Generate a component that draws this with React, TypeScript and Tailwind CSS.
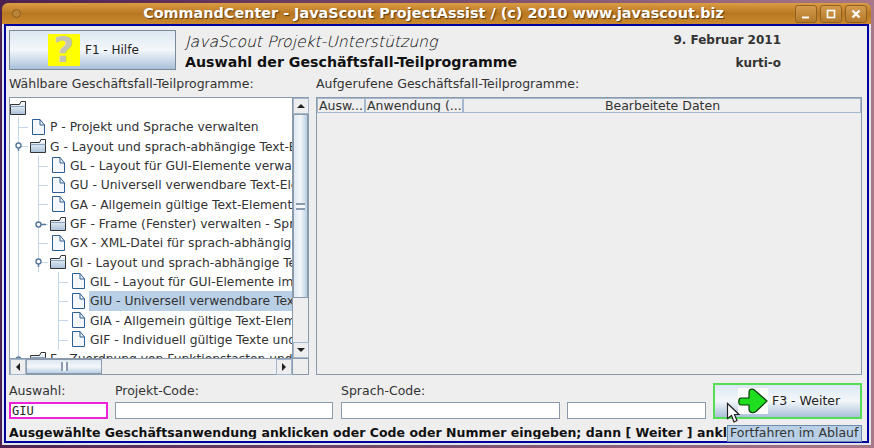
import React from "react";

const FileIcon = () => (
  <svg width="15" height="17" viewBox="0 0 15 17" className="shrink-0">
    <path d="M2.5 .5H10L14.5 6V15.5H2.5Z" fill="#f4f8fc" stroke="#2f5f92" />
    <path d="M10 .5V6H14.5" fill="none" stroke="#2f5f92" />
  </svg>
);

const FolderIcon = () => (
  <svg width="16" height="14" viewBox="0 0 16 14" className="shrink-0">
    <defs>
      <linearGradient id="fold" x1="0" y1="0" x2="0" y2="1">
        <stop offset="0" stopColor="#ffffff" />
        <stop offset="1" stopColor="#a9c1da" />
      </linearGradient>
    </defs>
    <path d="M.5 3.5H9.5L11 .5H15.5V13.5H.5Z" fill="url(#fold)" stroke="#333333" />
    <path d="M.5 5.5H15.5" stroke="#8da5bf" />
  </svg>
);

type Row = { depth: number; kind: "file" | "folder"; text: string; open?: boolean; closed?: boolean; sel?: boolean; v: number[] };

const rows: Row[] = [
  { depth: 0, kind: "folder", text: "", v: [] },
  { depth: 1, kind: "file", text: "P - Projekt und Sprache verwalten", v: [1] },
  { depth: 1, kind: "folder", text: "G - Layout und sprach-abhängige Text-Elemente", open: true, v: [1] },
  { depth: 2, kind: "file", text: "GL - Layout für GUI-Elemente verwalten", v: [1, 2] },
  { depth: 2, kind: "file", text: "GU - Universell verwendbare Text-Elemente", v: [1, 2] },
  { depth: 2, kind: "file", text: "GA - Allgemein gültige Text-Elemente", v: [1, 2] },
  { depth: 2, kind: "folder", text: "GF - Frame (Fenster) verwalten - Sprache", closed: true, v: [1, 2] },
  { depth: 2, kind: "file", text: "GX - XML-Datei für sprach-abhängige Texte", v: [1, 2] },
  { depth: 2, kind: "folder", text: "GI - Layout und sprach-abhängige Texte", open: true, v: [1, 2] },
  { depth: 3, kind: "file", text: "GIL - Layout für GUI-Elemente implementieren", v: [1, 3] },
  { depth: 3, kind: "file", text: "GIU - Universell verwendbare Texte", sel: true, v: [1, 3] },
  { depth: 3, kind: "file", text: "GIA - Allgemein gültige Text-Elemente", v: [1, 3] },
  { depth: 3, kind: "file", text: "GIF - Individuell gültige Texte und Bilder", v: [1, 3] },
  { depth: 1, kind: "folder", text: "F - Zuordnung von Funktionstasten und Buttons", closed: true, v: [1] },
];

const Guides = ({ row }: { row: Row }) => {
  const w = row.depth * 20;
  if (w === 0) return null;
  const hx = (row.depth - 1) * 20 + 8;
  const spines: Record<number, number> = { 1: 8, 2: 28, 3: 48 };
  return (
    <svg width={w} height="20" viewBox={`0 0 ${w} 20`} className="shrink-0">
      {row.v.map((d) => (
        <path key={d} d={`M${spines[d] + 0.5} 0V20`} stroke="#c6d6e6" fill="none" />
      ))}
      <path d={`M${hx} 10.5H${hx + 10}`} stroke="#c6d6e6" />
      {row.open && (
        <>
          <circle cx={hx + 0.5} cy="9.5" r="2.5" fill="#fff" stroke="#56789c" strokeWidth="1.4" />
          <path d={`M${hx + 0.5} 12V15`} stroke="#56789c" strokeWidth="1.4" />
        </>
      )}
      {row.closed && (
        <>
          <circle cx={hx + 0.5} cy="10.5" r="2.5" fill="#fff" stroke="#56789c" strokeWidth="1.4" />
          <path d={`M${hx + 3} 10.5H${hx + 8}`} stroke="#56789c" strokeWidth="1.4" />
        </>
      )}
    </svg>
  );
};

const Arrow = ({ dir }: { dir: "up" | "down" | "left" | "right" }) => {
  const d = {
    up: "M1 7H9L5 3Z",
    down: "M1 3H9L5 7Z",
    left: "M7 1V9L3 5Z",
    right: "M3 1V9L7 5Z",
  }[dir];
  return (
    <svg width="10" height="10" viewBox="0 0 10 10">
      <path d={d} fill="#222" />
    </svg>
  );
};

const ScrollBtn = ({ dir }: { dir: "up" | "down" | "left" | "right" }) => (
  <div className="flex h-4 w-4 shrink-0 items-center justify-center border border-[#a3b8cc] bg-[#eeeeee]">
    <Arrow dir={dir} />
  </div>
);

const Field = ({ label, w, value, cls }: { label?: string; w: string; value?: string; cls?: string }) => (
  <div className={`flex flex-col ${w}`}>
    <div className="h-[17px] text-[12.5px] leading-[12px] text-[#333]">{label ?? "\u00a0"}</div>
    <div className={cls ?? "h-[17px] border border-[#8a9aaa] bg-white"}>
      {value && <div className="pl-[1px] font-['DejaVu_Sans_Mono',monospace] text-[12px] leading-[14px] text-[#222]">{value}</div>}
    </div>
  </div>
);

export default function App() {
  return (
    <div className="relative h-[448px] w-[874px] overflow-hidden bg-gradient-to-r from-[#4d214f] to-[#a87888] pt-[3px] pl-[2px] font-['DejaVu_Sans',sans-serif]">
      <div className="flex h-[442px] w-[869px] flex-col overflow-hidden rounded-t-[6px]">
        {/* title bar */}
        <div className="relative flex h-[21px] shrink-0 items-center justify-center bg-gradient-to-b from-[#dc9c42] via-[#b87822] to-[#cc8a2e] pr-[6px]">
          <div className="absolute left-[10px] top-[6px] h-[9px] w-[9px] rounded-full border border-[#8d5d1c] bg-[#b9843c]" />
          <span className="text-[14.4px] font-bold text-white [text-shadow:1px_1px_1px_#5a3a10]">
            CommandCenter - JavaScout ProjectAssist / (c) 2010 www.javascout.biz
          </span>
          <div className="absolute right-[4px] top-[2px] flex gap-[3px]">
            {["min", "max", "close"].map((k) => (
              <div key={k} className="flex h-[18px] w-[22px] items-center justify-center rounded-[3px] border border-[#8f6222] bg-gradient-to-b from-[#d39b4c] to-[#b57a2a]">
                <svg width="12" height="12" viewBox="0 0 12 12">
                  {k === "min" && <path d="M2 9.5H9" stroke="#fff" strokeWidth="2" />}
                  {k === "max" && <rect x="2.5" y="2.5" width="7" height="7" fill="none" stroke="#fff" strokeWidth="1.6" />}
                  {k === "close" && <path d="M2.5 2.5L9.5 9.5M9.5 2.5L2.5 9.5" stroke="#fff" strokeWidth="2.4" />}
                </svg>
              </div>
            ))}
          </div>
        </div>
        {/* body */}
        <div className="flex min-h-0 flex-1 flex-col border-x-2 border-b-2 border-[#dfe3ea]">
          <div className="flex min-h-0 flex-1 flex-col overflow-hidden border-2 border-[#00009c] bg-[#eeeeee] pl-[3px] pr-[5px] pt-[4px] text-[#333]">
            <div className="flex h-[40px] shrink-0">
              <div className="flex h-[40px] w-[167px] items-center border border-[#7a8a9a] bg-gradient-to-b from-[#dde8f3] via-[#f4f7fa] to-[#a9c1da] pl-[38px]">
                <div className="flex h-[32px] w-[32px] items-center justify-center overflow-hidden bg-[#ffff00] text-[36px] font-bold leading-none text-[#c4c4b4]">?</div>
                <span className="ml-[5px] text-[12px] text-[#222]">F1 - Hilfe</span>
              </div>
              <div className="ml-[9px] flex flex-1 flex-col">
                <div className="flex h-[22px] items-center justify-between pr-[81px]">
                  <span className="pt-[2px] font-['DejaVu_Sans_Light','DejaVu_Sans',sans-serif] text-[15.6px] font-light italic leading-[20px] text-[#000]">JavaScout Projekt-Unterstützung</span>
                  <span className="pb-[2px] text-[12px] font-bold text-[#333]">9. Februar 2011</span>
                </div>
                <div className="flex h-[26px] items-center justify-between pr-[81px]">
                  <span className="text-[14.2px] font-bold text-[#111]">Auswahl der Geschäftsfall-Teilprogramme</span>
                  <span className="text-[12px] font-bold text-[#333]">kurti-o</span>
                </div>
              </div>
            </div>

            <div className="mt-[7px] flex h-[20px] shrink-0 text-[12.5px] leading-[14px] text-[#333]">
              <div className="w-[307px]">Wählbare Geschäftsfall-Teilprogramme:</div>
              <div>Aufgerufene Geschäftsfall-Teilprogramme:</div>
            </div>

            <div className="flex h-[278px] shrink-0 gap-[7px]">
              {/* tree */}
              <div className="grid h-full w-[300px] shrink-0 grid-cols-[1fr_16px] grid-rows-[1fr_16px] border border-[#8a9aaa] bg-white">
                <div className="min-w-0 overflow-hidden text-[12.3px] text-[#333]">
                  {rows.map((r, i) => (
                    <div key={i} className="flex h-[19.35px] items-center whitespace-nowrap">
                      <Guides row={r} />
                      {r.kind === "file" ? <FileIcon /> : <FolderIcon />}
                      {r.text && (
                        <span className={`block h-[19.35px] flex-1 pl-[1px] leading-[20px] ${r.kind === "file" ? "ml-[4px]" : "ml-[3px]"} ${r.sel ? "bg-[#b8cfe5]" : ""}`}>{r.text}</span>
                      )}
                    </div>
                  ))}
                </div>
                <div className="flex flex-col border-l border-[#8a9aaa] bg-[#eeeeee]">
                  <ScrollBtn dir="up" />
                  <div className="flex h-[184px] items-center justify-center border border-[#8a9aaa] bg-gradient-to-r from-[#dde8f3] via-[#f4f7fa] to-[#b8cfe5]">
                    <div className="h-[7px] w-[9px] border-y-[2px] border-[#8a9ab0] bg-[#f4f7fa]" />
                  </div>
                  <div className="flex-1" />
                  <ScrollBtn dir="down" />
                </div>
                <div className="flex border-t border-[#8a9aaa] bg-[#eeeeee]">
                  <ScrollBtn dir="left" />
                  <div className="flex w-[76px] items-center justify-center border border-[#8a9aaa] bg-gradient-to-b from-[#dde8f3] via-[#f4f7fa] to-[#b8cfe5]">
                    <div className="h-[9px] w-[7px] border-x-[2px] border-[#8a9ab0] bg-[#f4f7fa]" />
                  </div>
                  <div className="flex-1" />
                  <ScrollBtn dir="right" />
                </div>
                <div className="border-l border-t border-[#8a9aaa] bg-[#eeeeee]" />
              </div>
              {/* table */}
              <div className="h-full flex-1 border border-[#8a9aaa] bg-[#eeeeee]">
                <div className="flex h-[15px] text-[12.5px] leading-[14px] text-[#333]">
                  {[
                    ["w-[48px]", "Ausw..."],
                    ["w-[98px]", "Anwendung (..."],
                    ["flex-1 text-center", "Bearbeitete Daten"],
                  ].map(([c, t]) => (
                    <div key={t} className={`${c} overflow-hidden whitespace-nowrap border border-[#a3b8cc] bg-[#eeeeee] pl-[1px]`}>{t}</div>
                  ))}
                </div>
              </div>
            </div>

            {/* bottom row */}
            <div className="mt-[8px] flex h-[36px] shrink-0 items-end">
              <Field label="Auswahl:" w="w-[99px]" value="GIU" cls="h-[17px] border-2 border-[#ee22dd] bg-white" />
              <div className="w-[7px]" />
              <Field label="Projekt-Code:" w="w-[218px]" />
              <div className="w-[8px]" />
              <Field label="Sprach-Code:" w="w-[219px]" />
              <div className="w-[7px]" />
              <Field w="w-[139px]" />
              <div className="w-[7px]" />
              <div className="flex h-[36px] w-[149px] items-center border-2 border-[#55dd55] bg-gradient-to-b from-[#dde8f3] via-[#f4f7fa] to-[#a9c1da] pl-[23px]">
                <svg width="30" height="26" viewBox="0 0 30 26" className="shrink-0">
                  <rect width="30" height="26" fill="#fbfdfb" />
                  <path d="M3 10H11V4Q11 .8 14.5 1.2Q16 1.4 17.5 3L29 13L18 23.5Q16 25.2 14 24.6Q11 24 11 21V17H3Q.8 17 .8 13.5Q.8 10 3 10Z" fill="#1fdd1f" stroke="#0c3a0c" strokeWidth="1.2" />
                </svg>
                <span className="ml-[4px] text-[12.5px] text-[#222]">F3 - Weiter</span>
              </div>
            </div>

            <div className="mt-[7px] h-[13px] shrink-0 overflow-hidden whitespace-nowrap text-[12.5px] font-bold leading-[14px] tracking-[0.03px] text-[#111]">
              Ausgewählte Geschäftsanwendung anklicken oder Code oder Nummer eingeben; dann [ Weiter ] anklicken
            </div>
          </div>
        </div>
      </div>

      {/* tooltip */}
      <div className="absolute left-[727px] top-[425px] flex h-[17px] w-[135px] items-center border border-[#6a8ab0] bg-[#b8cfe5] pl-[2px] text-[12.5px] text-[#333]">
        Fortfahren im Ablauf
      </div>
      {/* mouse cursor */}
      <svg className="absolute left-[726px] top-[402px]" width="15" height="22" viewBox="0 0 15 22">
        <path d="M1.5 1.5V16.5L5.5 13.5L8 20L11 18.5L8.5 12.5H13Z" fill="#fff" stroke="#222" strokeWidth="1.2" />
      </svg>
    </div>
  );
}
